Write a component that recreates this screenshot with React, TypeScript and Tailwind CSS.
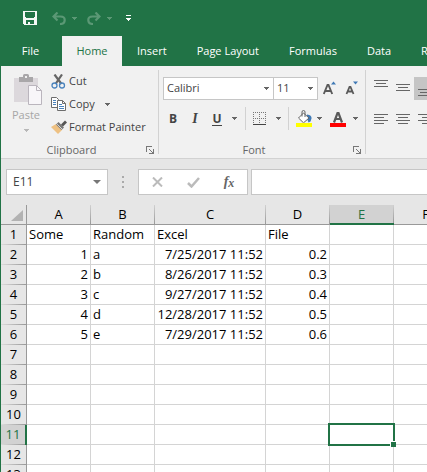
import React from 'react';

const COLUMNS = ['A', 'B', 'C', 'D', 'E', 'F'];
const COLUMN_WIDTHS = ['w-16', 'w-16', 'w-[111px]', 'w-16', 'w-16', 'w-16'];
const ROWS = Array.from({ length: 13 }, (_, i) => i + 1);
const DATA: string[][] = [
  ['Some', 'Random', 'Excel', 'File'],
  ['1', 'a', '7/25/2017 11:52', '0.2'],
  ['2', 'b', '8/26/2017 11:52', '0.3'],
  ['3', 'c', '9/27/2017 11:52', '0.4'],
  ['4', 'd', '12/28/2017 11:52', '0.5'],
  ['5', 'e', '7/29/2017 11:52', '0.6'],
];
const ACTIVE_COLUMN = 'E';
const ACTIVE_ROW = 11;

function Caret({ className = 'text-[#666]' }: { className?: string }) {
  return (
    <svg className={`shrink-0 ${className}`} width="5" height="3" viewBox="0 0 5 3" fill="currentColor" shapeRendering="crispEdges" aria-hidden="true">
      <path d="M0 0h5v1H4v1H3v1H2V2H1V1H0z" />
    </svg>
  );
}

type IconButtonProps = { label: string; className?: string; children: React.ReactNode };

function IconButton({ label, className = '', children }: IconButtonProps) {
  return (
    <button type="button" aria-label={label} className={`flex shrink-0 items-center justify-center ${className}`}>
      {children}
    </button>
  );
}

function Separator({ className = '' }: { className?: string }) {
  return <div className={`w-px shrink-0 bg-[#d2d2d2] ${className}`} />;
}

function SaveIcon() {
  return (
    <svg width="14" height="14" viewBox="0 0 14 14" shapeRendering="crispEdges" aria-hidden="true">
      <path d="M0 0h14v14H1L0 13z" fill="#f4f8f5" />
      <path d="M2 1h10v5h-1v1H3V6H2z" fill="#217346" />
      <path d="M3 9h8v4H7v-2H5v2H3z" fill="#217346" />
    </svg>
  );
}

function UndoIcon({ flipped = false }: { flipped?: boolean }) {
  return (
    <svg width="14" height="13" viewBox="0 0 14 13" className={flipped ? '-scale-x-100' : ''} aria-hidden="true">
      <path d="M5.500 .5 1.500 4.500l4 4M2 4.500h6.500c2.700 0 4.200 1.200 4.200 3.500s-1.700 4-4.700 4" fill="none" stroke="#5b9875" strokeWidth="2.200" />
    </svg>
  );
}

function TitleBar() {
  return (
    <div className="flex h-9 items-center pl-[22px]">
      <IconButton label="Save">
        <SaveIcon />
      </IconButton>
      <IconButton label="Undo" className="ml-[15px]">
        <UndoIcon />
      </IconButton>
      <IconButton label="Undo history" className="ml-1.5">
        <Caret className="text-[#5b9875]" />
      </IconButton>
      <IconButton label="Redo" className="ml-2.5">
        <UndoIcon flipped />
      </IconButton>
      <IconButton label="Redo history" className="ml-1.5">
        <Caret className="text-[#5b9875]" />
      </IconButton>
      <IconButton label="Customize Quick Access Toolbar" className="ml-3.5 flex-col gap-0.5">
        <span className="h-px w-[5px] bg-white" />
        <Caret className="text-white" />
      </IconButton>
    </div>
  );
}

function RibbonTabs() {
  return (
    <nav className="flex h-[30px] text-white">
      <button type="button" className="w-[61px] shrink-0 pr-0.5">File</button>
      <button type="button" className="w-[60px] shrink-0 bg-[#f1f1f1] text-[#217346]">Home</button>
      {['Insert', 'Page Layout', 'Formulas', 'Data', 'Review'].map((tab) => (
        <button key={tab} type="button" className="shrink-0 px-[15px] whitespace-nowrap">
          {tab}
        </button>
      ))}
    </nav>
  );
}

function PasteIcon() {
  return (
    <svg className="shrink-0" width="28" height="31" viewBox="0 0 28 31" aria-hidden="true">
      <path d="M0 4h24v24H0z" fill="#dcd8dc" />
      <path d="M5 3h4V1.500Q9 0 10.500 0h3Q15 0 15 1.500V3h4v5H5z" fill="#a9a7a9" />
      <path d="M11 2h2v2h-2z" fill="#f1f1f1" />
      <path d="M14.500 11.500h8l5 5v14h-13z" fill="#f8f6f9" stroke="#bab5bd" />
      <path d="M22.500 11.500v5h5" fill="none" stroke="#bab5bd" />
    </svg>
  );
}

function CutIcon() {
  return (
    <svg width="15" height="15" viewBox="0 0 15 15" fill="none" aria-hidden="true">
      <path d="M3.500 0.500 10.500 10M11 0.500 4.500 10" stroke="#666" strokeWidth="2.200" />
      <circle cx="3.500" cy="11.500" r="2.500" stroke="#4a83bd" strokeWidth="1.300" />
      <circle cx="11" cy="11.500" r="2.500" stroke="#4a83bd" strokeWidth="1.300" />
    </svg>
  );
}

function CopyIcon() {
  return (
    <svg width="15" height="15" viewBox="0 0 15 15" aria-hidden="true">
      <path d="M.5.5h5l2 2v8h-7z" fill="#fff" stroke="#6d6d6d" />
      <path d="M2 3.500h3M2 5.500h3M2 7.500h3" stroke="#4a83bd" />
      <path d="M6.500 3.500h5l3 3v7h-8z" fill="#fff" stroke="#6d6d6d" />
      <path d="M11.500 3.500v3h3" fill="none" stroke="#6d6d6d" />
      <path d="M8 7.500h3M8 9.500h5M8 11.500h5" stroke="#4a83bd" />
    </svg>
  );
}

function BrushIcon() {
  return (
    <svg width="16" height="15" viewBox="0 0 16 15" aria-hidden="true">
      <path d="M0 7 5 4l6 6-4 4z" fill="#eec183" />
      <path d="M5 4.500 7.500 2l5.500 5.500-2.500 2.500z" fill="#777" />
      <path d="M10 4.500 14 .5l2 2-4 4z" fill="#555" />
      <path d="M6.200 4.200 11 9" stroke="#f1f1f1" strokeWidth=".8" />
    </svg>
  );
}

function GroupLabel({ name }: { name: string }) {
  return (
    <div className="mt-auto flex h-4 items-center leading-4 text-[#666]">
      <span className="flex-1 text-center">{name}</span>
      <IconButton label={`${name} settings`} className="w-4">
        <svg width="8" height="8" viewBox="0 0 8 8" fill="none" stroke="#777" shapeRendering="crispEdges" aria-hidden="true">
          <path d="M.5 6V.5H6M3 3l4 4M7.500 3v4.500H3M5.500 6.500h1" />
        </svg>
      </IconButton>
    </div>
  );
}

function ClipboardGroup() {
  return (
    <section className="flex w-[157px] shrink-0 flex-col pt-1">
      <div className="flex">
        <button type="button" className="flex h-[69px] w-[50px] shrink-0 flex-col items-center pt-1 pl-1 text-[#a6a6a6]">
          <PasteIcon />
          <span className="mr-1 leading-5">Paste</span>
          <Caret className="mt-1 mr-1 text-[#b8b8b8]" />
        </button>
        <div className="flex flex-col">
          <button type="button" className="flex h-[23px] items-center gap-0.5">
            <span className="w-4"><CutIcon /></span>Cut
          </button>
          <button type="button" className="flex h-[23px] items-center gap-0.5">
            <span className="w-4"><CopyIcon /></span>Copy
            <Caret className="ml-2 text-[#666]" />
          </button>
          <button type="button" className="flex h-[23px] items-center gap-0.5 whitespace-nowrap">
            <span className="w-4"><BrushIcon /></span>Format Painter
          </button>
        </div>
      </div>
      <GroupLabel name="Clipboard" />
    </section>
  );
}

function Combo({ label, value, className }: { label: string; value: string; className: string }) {
  return (
    <div className={`relative h-[23px] shrink-0 ${className}`}>
      <select aria-label={label} defaultValue={value} className="size-full appearance-none border border-[#c6c6c6] bg-white pl-[3px] text-[#444] outline-none">
        <option>{value}</option>
      </select>
      <span className="pointer-events-none absolute inset-y-0 right-[5px] flex items-center">
        <Caret />
      </span>
    </div>
  );
}

function FontSizeIcon({ grow }: { grow: boolean }) {
  return (
    <svg width="14" height="15" viewBox="1 0 14 15" aria-hidden="true">
      {grow ? (
        <>
          <path d="M1.800 13 5.500 4h1l3.700 9M3 10h6" fill="none" stroke="#5a5a5a" strokeWidth="1.900" />
          <path d="M9 3.500 11.500 .5l2.500 3z" fill="#3f79b5" />
        </>
      ) : (
        <>
          <path d="M2.500 13 5.500 6h1l3 7M3.500 10.500h5" fill="none" stroke="#5a5a5a" strokeWidth="1.800" />
          <path d="M9 .5h5l-2.500 3z" fill="#3f79b5" />
        </>
      )}
    </svg>
  );
}

function BordersIcon() {
  return (
    <svg width="14" height="13" viewBox="0 0 14 13" fill="none" shapeRendering="crispEdges" aria-hidden="true">
      <path d="M0 .5h13M0 6.500h13M.5 0v12M6.500 0v12M12.500 0v12" stroke="#777" strokeDasharray="1 1" />
      <path d="M0 12.500h13" stroke="#444" />
    </svg>
  );
}

function FillIcon() {
  return (
    <svg width="16" height="17" viewBox="0 0 16 17" aria-hidden="true">
      <path d="M11 4.500q5 .5 4.500 4l-1 3-2 1-1.500-4z" fill="#3f79b5" />
      <path d="M2.500 8 7.500 3l5.500 5-5.500 4.800z" fill="#fff" stroke="#666" />
      <path d="M6 6.500V2q0-1.500 1.500-1.500T9 2v5" fill="none" stroke="#666" />
      <path d="M0 13h16v4H0z" fill="#ff0" />
    </svg>
  );
}

function FontColorIcon() {
  return (
    <svg width="16" height="17" viewBox="0 0 16 17" aria-hidden="true">
      <path d="M4 12.500 7.500 3h1L12 12.500M5.500 9h5" fill="none" stroke="#5a5a5a" strokeWidth="2.200" />
      <path d="M0 13h16v4H0z" fill="#f00" />
    </svg>
  );
}

function FontGroup() {
  return (
    <section className="flex w-[206px] shrink-0 flex-col pt-[11px]">
      <div className="flex pl-1">
        <Combo label="Font" value="Calibri" className="w-[111px]" />
        <Combo label="Font size" value="11" className="-ml-px w-[45px]" />
        <IconButton label="Increase font size" className="ml-px w-[22px]">
          <FontSizeIcon grow />
        </IconButton>
        <IconButton label="Decrease font size" className="w-[22px]">
          <FontSizeIcon grow={false} />
        </IconButton>
      </div>
      <div className="mt-[7px] flex h-[23px] pl-1 text-[#444]">
        <IconButton label="Bold" className="w-5 text-xs font-bold">B</IconButton>
        <IconButton label="Italic" className="ml-0.5 w-5 font-['Liberation_Serif',serif] text-sm font-bold italic">I</IconButton>
        <IconButton label="Underline" className="ml-0.5 w-5 text-xs font-bold">
          <span className="border-b border-[#444] leading-[13px]">U</span>
        </IconButton>
        <IconButton label="Underline style" className="mr-1 w-3.5"><Caret /></IconButton>
        <Separator />
        <IconButton label="Bottom border" className="w-7"><BordersIcon /></IconButton>
        <IconButton label="Border style" className="mr-1.5 w-2"><Caret /></IconButton>
        <Separator />
        <IconButton label="Fill color" className="ml-[5px] w-5"><FillIcon /></IconButton>
        <IconButton label="Choose fill color" className="w-2.5"><Caret /></IconButton>
        <IconButton label="Font color" className="ml-1 w-5"><FontColorIcon /></IconButton>
        <IconButton label="Choose font color" className="ml-0.5 w-2.5"><Caret /></IconButton>
      </div>
      <GroupLabel name="Font" />
    </section>
  );
}

function AlignIcon({ d }: { d: string }) {
  return (
    <svg width="14" height="17" viewBox="0 0 14 17" fill="none" stroke="#666" shapeRendering="crispEdges" aria-hidden="true">
      <path d={d} />
    </svg>
  );
}

function AlignmentGroup() {
  return (
    <section className="flex shrink-0 flex-col gap-[7px] pt-[11px] pl-1">
      <div className="flex h-[23px]">
        <IconButton label="Top align" className="w-[22px]"><AlignIcon d="M0 .5h14M2 3.500h10M0 6.500h14" /></IconButton>
        <IconButton label="Middle align" className="w-[22px]"><AlignIcon d="M0 4.500h14M2 7.500h10M0 10.500h14" /></IconButton>
        <IconButton label="Bottom align" className="w-[22px] bg-[#c5c5c5]"><AlignIcon d="M0 9.500h14M2 12.500h10M0 15.500h14" /></IconButton>
      </div>
      <div className="flex h-[23px]">
        <IconButton label="Align left" className="w-[22px]"><AlignIcon d="M0 4.500h14M0 7.500h10M0 10.500h14M0 13.500h10" /></IconButton>
        <IconButton label="Center" className="w-[22px]"><AlignIcon d="M0 4.500h14M2 7.500h10M0 10.500h14M2 13.500h10" /></IconButton>
        <IconButton label="Align right" className="w-[22px]"><AlignIcon d="M0 4.500h14M4 7.500h10M0 10.500h14M4 13.500h10" /></IconButton>
      </div>
    </section>
  );
}

function Ribbon() {
  return (
    <div className="flex h-[93px] border-b border-[#d2d2d2] bg-[#f1f1f1]">
      <ClipboardGroup />
      <Separator className="my-1" />
      <FontGroup />
      <Separator className="my-1" />
      <AlignmentGroup />
    </div>
  );
}

function FormulaBar() {
  return (
    <div className="flex py-2.5 pl-[5px]">
      <div className="flex h-[26px] w-[102px] shrink-0 items-center border border-[#c6c6c6] bg-white pr-1.5">
        <input aria-label="Name box" defaultValue="E11" className="w-full min-w-0 flex-1 pl-1.5 text-xs text-[#444] outline-none" />
        <IconButton label="Show names">
          <svg width="8" height="4" viewBox="0 0 8 4" fill="#777" aria-hidden="true"><path d="M0 0h8L4 4z" /></svg>
        </IconButton>
      </div>
      <div className="flex w-[30px] shrink-0 flex-col items-center justify-center gap-[3px]">
        <span className="size-0.5 bg-[#aaa]" />
        <span className="size-0.5 bg-[#aaa]" />
        <span className="size-0.5 bg-[#aaa]" />
      </div>
      <div className="flex h-[26px] w-[110px] shrink-0 border border-[#c6c6c6] bg-white">
        <IconButton label="Cancel" className="w-9">
          <svg width="11" height="10" viewBox="0 0 11 10" fill="none" stroke="#bbb" strokeWidth="2" aria-hidden="true"><path d="m1 .5 9 9M10 .5l-9 9" /></svg>
        </IconButton>
        <IconButton label="Enter" className="w-9">
          <svg width="13" height="11" viewBox="0 0 13 11" fill="none" stroke="#bbb" strokeWidth="2.500" aria-hidden="true"><path d="m1 6 3.500 3.500L12 1" /></svg>
        </IconButton>
        <IconButton label="Insert function" className="w-9 font-['Liberation_Serif',serif] text-sm leading-4 font-bold text-[#666] italic">
          <span>f</span><span className="pt-0.5 text-xs">x</span>
        </IconButton>
      </div>
      <input aria-label="Formula bar" className="ml-[3px] h-[26px] min-w-0 flex-1 border border-r-0 border-[#c6c6c6] bg-white px-2 outline-none" />
    </div>
  );
}

function ColumnHeader({ name }: { name: string }) {
  const active = name === ACTIVE_COLUMN;
  return (
    <th
      scope="col"
      className={`h-5 p-0 font-normal ${active ? 'border-b-2 border-[#217346] bg-[#d2d2d2] text-[#217346]' : 'border-b border-[#999]'}`}
    >
      <div className={`flex ${active ? 'h-[18px]' : 'h-[19px]'}`}>
        <span className="flex-1">{name}</span>
        <span className="w-px bg-linear-to-b from-[#d0d0d0] to-[#999]" />
      </div>
    </th>
  );
}

function Sheet() {
  return (
    <div className="min-h-0 flex-1 overflow-hidden">
      <table className="w-full min-w-[457px] table-fixed border-separate border-spacing-0 text-[13px] leading-[19px] text-black">
        <colgroup>
          <col className="w-[26px]" />
          {COLUMN_WIDTHS.map((width, i) => (
            <col key={COLUMNS[i]} className={width} />
          ))}
        </colgroup>
        <thead>
          <tr className="h-5">
            <td className="border-r border-b border-[#999] p-0">
              <button type="button" aria-label="Select all" className="flex h-[19px] w-full items-end justify-end pr-[3px] pb-[3px]">
                <svg width="12" height="11" viewBox="0 0 12 11" fill="#b2b2b2" aria-hidden="true"><path d="M12 0v11H0z" /></svg>
              </button>
            </td>
            {COLUMNS.map((name) => (
              <ColumnHeader key={name} name={name} />
            ))}
          </tr>
        </thead>
        <tbody>
          {ROWS.map((row) => (
            <tr key={row} className="h-5">
              <th
                scope="row"
                className={`p-0 font-normal ${row === ACTIVE_ROW ? 'border-r-2 border-[#217346] bg-[#d2d2d2] text-[#217346]' : 'border-r border-[#999]'}`}
              >
                <div className="leading-[19px]">{row}</div>
                <div className="h-px bg-linear-to-r from-[#dcdcdc] to-[#999]" />
              </th>
              {COLUMNS.map((name, c) => {
                const active = row === ACTIVE_ROW && name === ACTIVE_COLUMN;
                const numeric = row > 1 && c !== 1;
                return (
                  <td
                    key={name}
                    className={`border-r border-b border-[#d4d4d4] bg-white px-0.5 py-0 whitespace-nowrap ${numeric ? 'text-right' : 'text-left'} ${active ? 'relative' : ''}`}
                  >
                    {DATA[row - 1]?.[c]}
                    {active && (
                      <div className="absolute -inset-0.5 z-10 border-2 border-[#217346]">
                        <span className="absolute -right-[3px] -bottom-[3px] size-1.5 border-t border-l border-white bg-[#217346]" />
                      </div>
                    )}
                  </td>
                );
              })}
            </tr>
          ))}
        </tbody>
      </table>
    </div>
  );
}

export default function App() {
  return (
    <main className="flex h-screen flex-col overflow-hidden border-l border-[#217346] bg-[#e6e6e6] font-['Open_Sans',sans-serif] text-[11px] text-[#444]">
      <header className="bg-[#217346]">
        <TitleBar />
        <RibbonTabs />
      </header>
      <Ribbon />
      <FormulaBar />
      <Sheet />
    </main>
  );
}
